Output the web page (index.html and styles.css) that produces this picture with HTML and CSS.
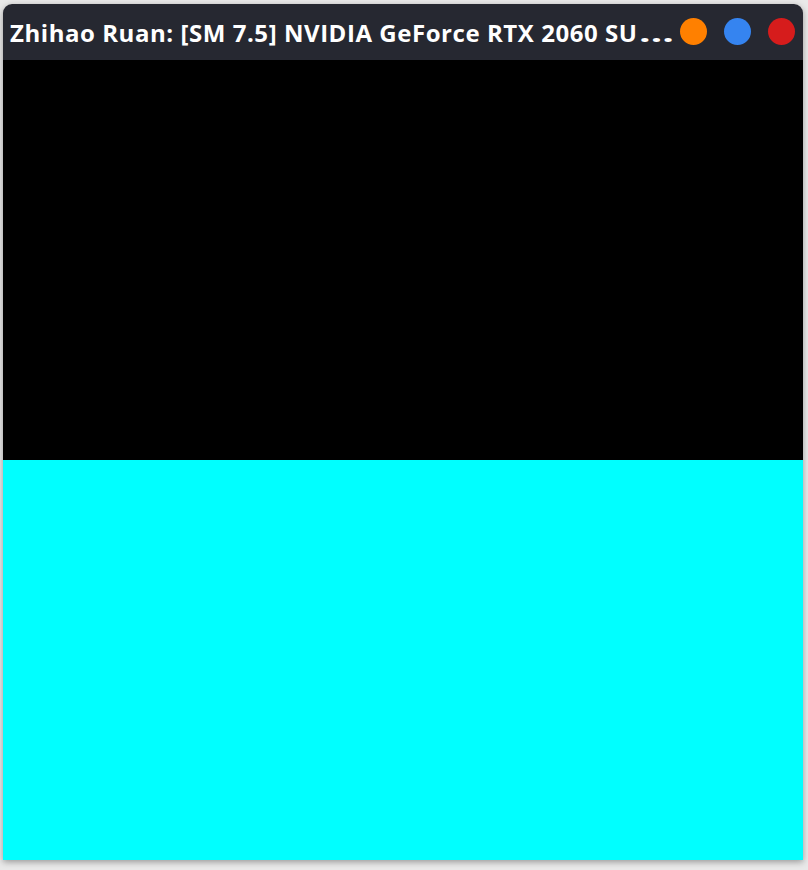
FILE: index.html
```html
<!DOCTYPE html>
<html>
<head>
<meta charset="utf-8">
<link rel="stylesheet" href="styles.css">
</head>
<body>
<div class="window">
  <div class="titlebar">
    <div class="title">Zhihao Ruan: [SM 7.5] NVIDIA GeForce RTX 2060 SU<span class="ell">…</span></div>
    <div class="controls">
      <span class="btn orange"></span>
      <span class="btn blue"></span>
      <span class="btn red"></span>
    </div>
  </div>
  <div class="pane black"></div>
  <div class="pane cyan"></div>
</div>
</body>
</html>
```
FILE: styles.css
```css
html, body {
  margin: 0;
  padding: 0;
  background: #e9e9e9;
  width: 808px;
  height: 870px;
  overflow: hidden;
}
body {
  padding: 4px 0 0 3px;
  box-sizing: border-box;
}
.window {
  width: 800px;
  display: flex;
  flex-direction: column;
  border-radius: 9px 9px 0 0;
  overflow: hidden;
  box-shadow: 0 2px 6px rgba(0,0,0,0.35);
}
.titlebar {
  height: 56px;
  background: #262831;
  display: flex;
  align-items: center;
  padding: 0 8px 0 7px;
  gap: 8px;
}
.title {
  flex: 1;
  min-width: 0;
  color: #ffffff;
  font-family: "Open Sans", "Noto Sans", sans-serif;
  font-weight: 700;
  font-size: 24px;
  letter-spacing: 0.55px;
  white-space: nowrap;
}
.ell {
  display: inline-block;
  margin-left: 1px;
  transform: scaleX(1.7);
  transform-origin: left center;
}
.controls {
  display: flex;
  gap: 17px;
  align-items: center;
  margin-top: -2px;
}
.btn {
  width: 27px;
  height: 27px;
  border-radius: 50%;
  display: block;
}
.orange { background: #ff8000; }
.blue { background: #3584f0; }
.red { background: #d61c1c; }
.pane { height: 400px; }
.black { background: #000000; }
.cyan { background: #00ffff; }
```
